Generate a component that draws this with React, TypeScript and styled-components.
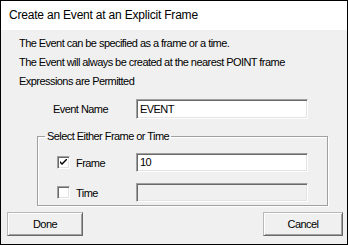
import styled, { createGlobalStyle } from 'styled-components';

const GlobalStyle = createGlobalStyle`
  html, body {
    margin: 0;
    padding: 0;
    background: #ffffff;
  }
  * {
    box-sizing: border-box;
  }
`;

const WindowStyled = styled.div`
  width: 348px;
  height: 245px;
  border: 1px solid #000000;
  display: flex;
  flex-direction: column;
  background: #f0f0f0;
  font-family: 'Liberation Sans', Arial, sans-serif;
  font-size: 11px;
  letter-spacing: -0.55px;
  color: #000000;
`;

const TitleBar = styled.div`
  height: 29px;
  line-height: 29px;
  padding-left: 8px;
  background: #ffffff;
  font-size: 12px;
  letter-spacing: -0.2px;
`;

const BodyStyled = styled.div`
  display: flex;
  flex-direction: column;
  padding: 4px 0 0 17px;
`;

const InfoLine = styled.div`
  height: 19px;
  line-height: 19px;
  padding-left: 1px;
`;

const FieldRow = styled.div<{ $indent: number; $labelWidth: number }>`
  display: grid;
  grid-template-columns: ${(p) => p.$labelWidth}px 172px;
  align-items: center;
  padding-left: ${(p) => p.$indent}px;
`;

const EventRow = styled(FieldRow)`
  margin-top: 8px;
  height: 20px;
`;

const FieldLabel = styled.span`
  display: flex;
  align-items: center;
  gap: 6px;
`;

const TextBox = styled.div<{ $disabled?: boolean; $height: number }>`
  height: ${(p) => p.$height}px;
  line-height: ${(p) => p.$height - 2}px;
  padding-left: 3px;
  background: ${(p) => (p.$disabled ? '#f0f0f0' : '#ffffff')};
  border: 1px solid;
  border-color: #a0a0a0 #ffffff #ffffff #a0a0a0;
  box-shadow: inset 1px 1px 0 #696969, inset -1px -1px 0 #e3e3e3;
`;

const GroupBox = styled.fieldset`
  margin: 11px 0 0 19px;
  padding: 10px 0 0 19px;
  width: 291px;
  height: 76px;
  border: 1px solid #a0a0a0;
  box-shadow: inset 1px 1px 0 #ffffff, 1px 1px 0 #ffffff;
  display: flex;
  flex-direction: column;
  gap: 11px;
`;

const Legend = styled.legend`
  margin-left: -12px;
  padding: 0 2px;
  line-height: 13px;
`;

const CheckBoxStyled = styled.span`
  width: 13px;
  height: 13px;
  display: inline-flex;
  align-items: center;
  justify-content: center;
  background: #ffffff;
  border: 1px solid;
  border-color: #a0a0a0 #ffffff #ffffff #a0a0a0;
  box-shadow: inset 1px 1px 0 #696969, inset -1px -1px 0 #e3e3e3;
`;

const ButtonRow = styled.div`
  display: flex;
  justify-content: space-between;
  padding: 0 4px 0 6px;
  margin-top: 6px;
`;

const ButtonStyled = styled.button<{ $width: number }>`
  width: ${(p) => p.$width}px;
  height: 24px;
  margin: 0;
  padding: 0;
  background: #f0f0f0;
  font: inherit;
  letter-spacing: inherit;
  color: #000000;
  border: 1px solid;
  border-color: #b9b9b9 #696969 #696969 #b9b9b9;
  box-shadow: inset 1px 1px 0 #ffffff, inset -1px -1px 0 #a0a0a0;
`;

const CheckBox = ({ checked }: { checked: boolean }) => (
  <CheckBoxStyled>
    {checked && (
      <svg width="7" height="7" viewBox="0 0 7 7">
        <path d="M0 2 L0 4 L2 6 L7 1 L7 -1 L2 4 Z" fill="#000000" />
      </svg>
    )}
  </CheckBoxStyled>
);

const App = () => {
  return (
    <>
      <GlobalStyle />
      <WindowStyled>
        <TitleBar>Create an Event at an Explicit Frame</TitleBar>
        <BodyStyled>
          <InfoLine>The Event can be specified as a frame or a time.</InfoLine>
          <InfoLine>The Event will always be created at the nearest POINT frame</InfoLine>
          <InfoLine>Expressions are Permitted</InfoLine>
          <EventRow $indent={35} $labelWidth={83}>
            <FieldLabel>Event Name</FieldLabel>
            <TextBox $height={20}>EVENT</TextBox>
          </EventRow>
          <GroupBox>
            <Legend>Select Either Frame or Time</Legend>
            <FieldRow $indent={0} $labelWidth={79}>
              <FieldLabel>
                <CheckBox checked />
                Frame
              </FieldLabel>
              <TextBox $height={19}>10</TextBox>
            </FieldRow>
            <FieldRow $indent={0} $labelWidth={79}>
              <FieldLabel>
                <CheckBox checked={false} />
                Time
              </FieldLabel>
              <TextBox $height={19} $disabled />
            </FieldRow>
          </GroupBox>
        </BodyStyled>
        <ButtonRow>
          <ButtonStyled $width={76}>Done</ButtonStyled>
          <ButtonStyled $width={80}>Cancel</ButtonStyled>
        </ButtonRow>
      </WindowStyled>
    </>
  );
};

export default App;
